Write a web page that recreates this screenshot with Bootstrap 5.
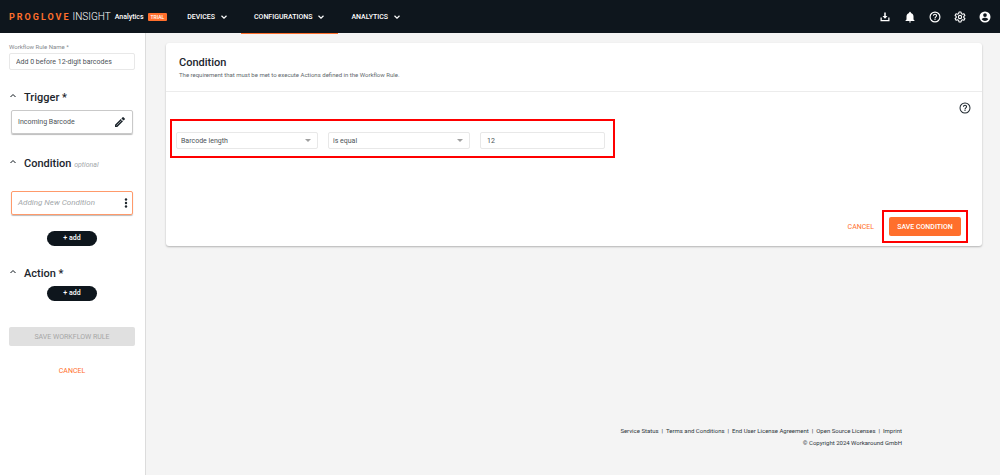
<!DOCTYPE html>
<html lang="en">
<head>
<meta charset="utf-8">
<meta name="viewport" content="width=device-width, initial-scale=1">
<title>ProGlove Insight – Workflow Rule</title>
<link href="https://cdn.jsdelivr.net/npm/bootstrap@5.3.0/dist/css/bootstrap.min.css" rel="stylesheet">
<style>
  :root { --ink: #0e161d; --brand: #ff6f2c; --line: #e8e8e8; --mark-red: #ff0000; }
  body { font-family: Roboto, "Liberation Sans", sans-serif; font-size: 7px; line-height: 12px; color: #3a4248; background: #f4f4f4; }
  button, input, select { font-family: inherit; }
  svg { display: block; fill: currentColor; }
  .topbar { background: var(--ink); height: 33px; color: #fff; }
  .home { padding-left: 9px; }
  .brand-name { color: var(--brand); font-weight: 700; font-size: 9px; letter-spacing: 2px; }
  .brand-product { margin: 0 4px 0 2px; font-size: 10px; font-weight: 300; color: #fff; }
  .brand-app { font-size: 7px; font-weight: 500; color: #fff; }
  .trial { background: var(--brand); color: #fff; font-size: 5px; line-height: 8px; font-weight: 500; border-radius: 1px; padding: 0 3px; }
  .menu { margin-left: 7px; }
  .menu-item { position: relative; height: 33px; padding: 0 13px; gap: 5px; color: #fff; font-size: 7px; font-weight: 500; text-decoration: none; }
  .menu-item.current::after { content: ""; position: absolute; left: 0; right: 0; top: 33px; height: 1px; background: var(--brand); }
  .tools { gap: 13px; padding-right: 9px; }
  .icon-btn { border: 0; background: none; padding: 0; color: inherit; }
  .dark-icon { color: #1d262d; }
  .shell { min-height: calc(100vh - 33px); }
  .side { width: 146px; flex: none; background: #fff; border-right: 1px solid #dcdcdc; padding: 8px 10px 0 9px; }
  .side label { font-size: 6px; color: #84898d; }
  .field { display: block; width: 100%; height: 17px; border: 1px solid var(--line); border-radius: 2px; background-color: #fff; color: #4c5358; font-size: 7px; padding: 0 6px; }
  .sec { gap: 7px; margin: 20px 0 4px; color: var(--ink); }
  .sec svg { margin-top: 2px; }
  .sec-open { margin: 22px 0 18px; }
  .sec h2, .panel h1 { font-size: 11px; line-height: 16px; font-weight: 500; margin: 0; color: #1d262d; }
  .sec .opt { font-size: 7px; font-weight: 400; font-style: italic; color: #a3a7aa; }
  .tile { height: 24px; margin: 0 2px; padding: 0 6px; border: 1px solid #c9c9c9; border-radius: 2px; box-shadow: 0 1px 1px #0004; color: #4c5358; }
  .tile.pending { border-color: #ff9a6b; color: #a3a7aa; font-size: 8px; font-style: italic; padding-right: 4px; }
  .add { background: var(--ink); color: #fff; border: 0; border-radius: 8px; width: 50px; height: 15px; font-size: 7px; line-height: 15px; font-weight: 500; padding: 0; display: block; }
  .save-rule { display: block; width: 100%; height: 19px; margin: 26px 0 19px; border: 0; border-radius: 2px; background: #e0e0e0; color: #a6a6a6; font-size: 7px; }
  .flat { display: block; border: 0; background: none; padding: 0; color: var(--brand); font-size: 7px; line-height: 12px; }
  .content { min-width: 0; padding: 10px 18px 26px 20px; }
  .panel { background: #fff; border-radius: 3px; box-shadow: 0 1px 2px #0004; }
  .panel-head { height: 49px; padding: 12px 13px 0; border-bottom: 1px solid #ececec; }
  .panel-head p { font-size: 6px; line-height: 8px; color: #62686c; }
  .panel-body { padding: 10px 11px 3px 4px; }
  .criteria { width: 445px; max-width: 100%; border: 3px solid var(--mark-red); border-width: 2px; padding: 11px 8px 7px 4px; gap: 10px; margin-top: 5px; }
  .criteria select { appearance: none; width: 142px; padding: 0 4px; }
  .pick { position: relative; }
  .pick::after { content: ""; position: absolute; right: 7px; top: 7px; border: 3px solid transparent; border-top-color: #a0a0a0; border-bottom: 0; pointer-events: none; }
  .actions { gap: 8px; margin-top: 52px; padding-right: 3px; }
  .marked { border: 2px solid var(--mark-red); padding: 5px; }
  .save { display: block; border: 0; border-radius: 2px; background: var(--brand); color: #fff; width: 72px; height: 19px; font-size: 7px; font-weight: 500; padding: 0; }
  .legal { padding-right: 80px; font-size: 6px; color: #2e363c; }
  .legal a { color: inherit; text-decoration: none; }
  .legal-links { gap: 3px; }
</style>
</head>
<body>
<header class="topbar d-flex align-items-center">
  <a href="#" class="home d-flex align-items-center text-decoration-none">
    <span class="brand-name">PROGLOVE</span>
    <span class="brand-product">INSIGHT</span>
    <span class="brand-app">Analytics</span>
    <span class="trial ms-1">TRIAL</span>
  </a>
  <nav class="menu d-flex">
    <a href="#" class="menu-item d-flex align-items-center">DEVICES <svg width="8" height="8" viewBox="0 0 8 8"><path d="M1.500 2.800 4 5.200l2.500-2.400" fill="none" stroke="currentColor" stroke-width="1.200"/></svg></a>
    <a href="#" class="menu-item current d-flex align-items-center">CONFIGURATIONS <svg width="8" height="8" viewBox="0 0 8 8"><path d="M1.500 2.800 4 5.200l2.500-2.400" fill="none" stroke="currentColor" stroke-width="1.200"/></svg></a>
    <a href="#" class="menu-item d-flex align-items-center">ANALYTICS <svg width="8" height="8" viewBox="0 0 8 8"><path d="M1.500 2.800 4 5.200l2.500-2.400" fill="none" stroke="currentColor" stroke-width="1.200"/></svg></a>
  </nav>
  <div class="tools d-flex ms-auto">
    <button class="icon-btn" aria-label="Downloads"><svg width="12" height="12" viewBox="0 0 24 24"><path d="M10.500 3h3v7H17l-5 5.500L7 10h3.500zM3 13h2.500v5h13v-5H21v7.500H3z"/></svg></button>
    <button class="icon-btn" aria-label="Notifications"><svg width="12" height="12" viewBox="0 0 24 24"><path d="M12 23c1.100 0 2-.9 2-2h-4c0 1.100.9 2 2 2zm7-6v-6c0-3.500-2-6.200-5.300-7V3a1.700 1.700 0 0 0-3.400 0v1C7 4.800 5 7.500 5 11v6l-2 2v1h18v-1z"/></svg></button>
    <button class="icon-btn" aria-label="Help"><svg width="12" height="12" viewBox="0 0 24 24"><path d="M11 18h2v-2h-2zm1-17a11 11 0 1 0 0 22 11 11 0 0 0 0-22zm0 19.700a8.700 8.700 0 1 1 0-17.400 8.700 8.700 0 0 1 0 17.400zM12 5.500a4.200 4.200 0 0 0-4.200 4.200H10a2 2 0 0 1 4 0c0 2-3.100 1.900-3.100 5.200h2.200c0-2.300 3.100-2.600 3.100-5.200A4.200 4.200 0 0 0 12 5.500z"/></svg></button>
    <button class="icon-btn" aria-label="Settings"><svg width="12" height="12" viewBox="0 0 24 24"><path fill="none" stroke="currentColor" stroke-width="2.200" stroke-linejoin="round" d="M10 2h4l.7 3.200 2 1.200 3.200-1 2 3.500L19.500 11v2l2.400 2.100-2 3.500-3.200-1-2 1.200L14 22h-4l-.7-3.200-2-1.200-3.200 1-2-3.500L4.500 13v-2L2.100 8.900l2-3.500 3.200 1 2-1.200z"/><circle cx="12" cy="12" r="3.300" fill="none" stroke="currentColor" stroke-width="2.200"/></svg></button>
    <button class="icon-btn" aria-label="Account"><svg width="12" height="12" viewBox="0 0 24 24"><path d="M12 1a11 11 0 1 0 0 22 11 11 0 0 0 0-22zm0 3.500a3.700 3.700 0 1 1 0 7.400 3.700 3.700 0 0 1 0-7.400zm0 15.700a7.900 7.900 0 0 1-6.600-3.500c0-2.200 4.400-3.400 6.600-3.400s6.600 1.200 6.600 3.400a7.900 7.900 0 0 1-6.600 3.500z"/></svg></button>
  </div>
</header>

<div class="shell d-flex">
  <aside class="side">
    <label for="rule" class="d-block">Workflow Rule Name *</label>
    <input id="rule" class="field" value="Add 0 before 12-digit barcodes">

    <div class="sec d-flex">
      <svg width="8" height="8" viewBox="0 0 8 8"><path d="M1.500 5 4 2.500 6.500 5" fill="none" stroke="currentColor"/></svg>
      <h2>Trigger *</h2>
    </div>
    <div class="tile d-flex align-items-center justify-content-between">
      <span>Incoming Barcode</span>
      <button class="icon-btn dark-icon" aria-label="Edit trigger"><svg width="12" height="12" viewBox="0 0 24 24"><path d="M2 17.500V22h4.500L18 10.500 13.500 6zm19.500-10.700a1.200 1.200 0 0 0 0-1.700l-2.600-2.600a1.200 1.200 0 0 0-1.700 0L14.800 4.800l4.400 4.400z"/><path stroke="#fff" d="m5 19 10.500-10.500"/></svg></button>
    </div>

    <div class="sec sec-open d-flex">
      <svg width="8" height="8" viewBox="0 0 8 8"><path d="M1.500 5 4 2.500 6.500 5" fill="none" stroke="currentColor"/></svg>
      <h2>Condition <span class="opt">optional</span></h2>
    </div>
    <div class="tile pending d-flex align-items-center justify-content-between">
      <span>Adding New Condition</span>
      <button class="icon-btn dark-icon" aria-label="Condition options"><svg width="4" height="10" viewBox="0 0 4 10"><circle cx="2" cy="1.500" r="1.200"/><circle cx="2" cy="5" r="1.200"/><circle cx="2" cy="8.500" r="1.200"/></svg></button>
    </div>
    <button class="add mx-auto mt-3">+ add</button>

    <div class="sec d-flex">
      <svg width="8" height="8" viewBox="0 0 8 8"><path d="M1.500 5 4 2.500 6.500 5" fill="none" stroke="currentColor"/></svg>
      <h2>Action *</h2>
    </div>
    <button class="add mx-auto">+ add</button>
    <button class="save-rule" disabled>SAVE WORKFLOW RULE</button>
    <button class="flat mx-auto">CANCEL</button>
  </aside>

  <main class="content flex-grow-1 d-flex flex-column">
    <section class="panel">
      <div class="panel-head">
        <h1>Condition</h1>
        <p class="mb-0">The requirement that must be met to execute Actions defined in the Workflow Rule.</p>
      </div>
      <div class="panel-body">
        <button class="icon-btn dark-icon d-block ms-auto" aria-label="Help"><svg width="12" height="12" viewBox="0 0 24 24"><path d="M11 18h2v-2h-2zm1-17a11 11 0 1 0 0 22 11 11 0 0 0 0-22zm0 20a9 9 0 1 1 0-18 9 9 0 0 1 0 18zM12 5.500a4.200 4.200 0 0 0-4.200 4.200H10a2 2 0 0 1 4 0c0 2-3.100 1.900-3.100 5.200h2.200c0-2.300 3.100-2.600 3.100-5.200A4.200 4.200 0 0 0 12 5.500z"/></svg></button>
        <div class="criteria d-flex">
          <div class="pick"><select class="field" aria-label="Attribute"><option>Barcode length</option></select></div>
          <div class="pick"><select class="field" aria-label="Comparison"><option>is equal</option></select></div>
          <input class="field flex-grow-1" aria-label="Value" value="12">
        </div>
        <div class="actions d-flex justify-content-end align-items-center">
          <button class="flat">CANCEL</button>
          <div class="marked"><button class="save">SAVE CONDITION</button></div>
        </div>
      </div>
    </section>
    <footer class="legal mt-auto text-end">
      <div class="legal-links d-flex justify-content-end"><a href="#">Service Status</a><span>|</span><a href="#">Terms and Conditions</a><span>|</span><a href="#">End User License Agreement</a><span>|</span><a href="#">Open Source Licenses</a><span>|</span><a href="#">Imprint</a></div>
      <div>© Copyright 2024 Workaround GmbH</div>
    </footer>
  </main>
</div>
<script src="https://cdn.jsdelivr.net/npm/bootstrap@5.3.0/dist/js/bootstrap.bundle.min.js"></script>
</body>
</html>
